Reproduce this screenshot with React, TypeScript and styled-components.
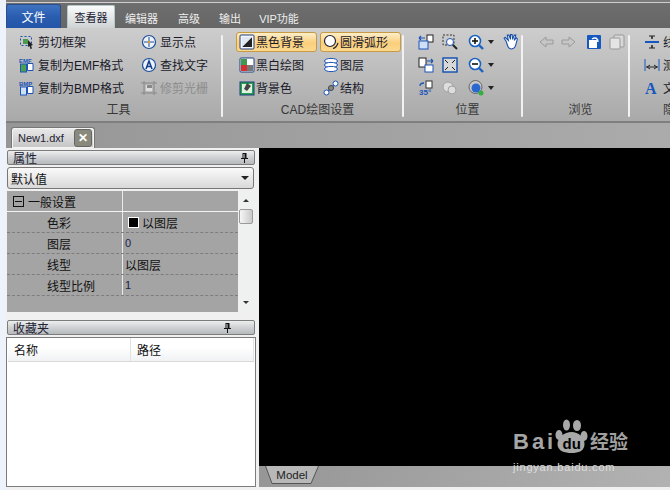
import React from 'react';
import styled, { createGlobalStyle } from 'styled-components';

const Global = createGlobalStyle`
  html, body { margin: 0; padding: 0; background: #f0f1f4; overflow: hidden; }
  * { box-sizing: border-box; }
  #root { width: 670px; height: 490px; }
`;
const FONT = `"Liberation Sans", "Noto Sans CJK SC", sans-serif`;

const Page = styled.div`
  width: 670px; height: 490px; display: flex; flex-direction: column; overflow: hidden;
  padding: 0 0 0 6px; font: 12px ${FONT}; color: #111;
  background: linear-gradient(90deg, #eef3fb 0, #eef3fb 6px, #f0f0f0 6px);
`;
const TabBar = styled.div`
  height: 28px; flex: none; display: flex; align-items: flex-end;
  background: linear-gradient(#7a7a7a 0, #7a7a7a 2px, #cfcfcf 2px, #cfcfcf 3px, #6e6e6e 3px, #666 100%);
`;
const FileTab = styled.div`
  width: 55px; height: 24px; margin-right: 6px; color: #fff; font-size: 12px; display: flex; align-items: center; justify-content: center;
  background: linear-gradient(#3f73c0, #2a5db0 50%, #2456a8); border: 1px solid #2b4f8c; border-bottom: none; border-radius: 3px 3px 0 0;
`;
const Tab = styled.div<{ $active?: boolean; $width: number; $gap?: number }>`
  height: ${p => (p.$active ? 23 : 20)}px; display: flex; align-items: center; font-size: 11px;
  width: ${p => p.$width}px; margin-right: ${p => p.$gap ?? 0}px; justify-content: center; white-space: nowrap;
  color: ${p => (p.$active ? '#223' : '#eee')};
  ${p => p.$active && `background: linear-gradient(#fafbfb, #cfd3d3); border: 1px solid #b5c9c9; border-bottom: none; border-radius: 2px 2px 0 0;`}
`;
const Ribbon = styled.div`
  height: 95px; flex: none; display: flex; overflow: hidden;
  background: linear-gradient(#cdcdcd, #bdbdbd 45%, #a9a9a9);
  border-bottom: 2px solid #7f7f7f;
`;
const Group = styled.div<{ $w: number }>`
  width: ${p => p.$w}px; flex: none; display: flex; flex-direction: column; align-items: center; padding-top: 2px;
  position: relative;
  &::after { content: ''; position: absolute; right: 0; top: 7px; height: 82px; width: 2px; background: #f2f2f2; border-radius: 1px; }
`;
const GroupBody = styled.div<{ $cols: string; $pad?: number }>`
  height: 69px; width: 100%; display: grid; grid-auto-flow: column; grid-template-rows: repeat(3, 23px); align-items: center;
  grid-template-columns: ${p => p.$cols}; padding-left: ${p => p.$pad ?? 0}px;
`;
const GroupLabel = styled.div`
  font-size: 12px; color: #383838; height: 16px; line-height: 16px; text-align: center; margin-top: 3px; width: 100%; padding-left: 8px; white-space: nowrap;
`;
const RibbonBtn = styled.div<{ $on?: boolean; $off?: boolean }>`
  height: 20px; display: flex; align-items: center; gap: 3px; padding-left: 3px; white-space: nowrap; font-size: 12px;
  color: ${p => (p.$off ? '#8d8d8d' : '#1a1a2a')};
  ${p => p.$on && `background: linear-gradient(#fdeec8, #fbcf7c 55%, #fbd98e); border: 1px solid #c79a45; border-radius: 3px; padding-left: 2px;`}
`;
const SettingBtn = styled(RibbonBtn)`
  width: 81px; gap: 1px;
`;
const IconCell = styled.div`
  height: 20px; display: flex; align-items: center; gap: 2px;
`;
const Caret = styled.span`
  width: 0; height: 0; border: 3px solid transparent; border-top: 4px solid #222; border-bottom: none; margin-left: 2px;
`;
const DocTabs = styled.div`
  height: 25px; flex: none; background: linear-gradient(90deg, #969696, #ababab); display: flex; align-items: flex-end; padding-left: 5px;
`;
const DocTab = styled.div`
  width: 84px; height: 21px; background: linear-gradient(#eaeaea, #c4c4c4); border: 1px solid #777; border-bottom: none; border-radius: 3px 3px 0 0;
  display: flex; align-items: center; justify-content: space-between; padding: 0 2px 0 6px; font-size: 11px; color: #223;
  box-shadow: inset 0 0 0 1px #f4f4f4;
`;
const CloseBtn = styled.div`
  width: 18px; height: 18px; background: #8a8a7c; border: 1px solid #666; border-radius: 3px; color: #fff; font-weight: 700; font-size: 12px;
  display: flex; align-items: center; justify-content: center; line-height: 1;
`;
const Main = styled.div`
  flex: 1; display: flex; min-height: 0; background: #f0f0f0;
`;
const Side = styled.div`
  width: 253px; flex: none; display: flex; flex-direction: column; padding-top: 2px;
`;
const PanelTitle = styled.div`
  width: 248px; height: 15px; display: flex; align-items: center; padding: 0 5px; font-size: 12px; color: #223; margin-left: 1px;
  background: linear-gradient(#eceeef, #cfd1d4 50%, #b7babd); border: 1px solid #7c7c7c; border-radius: 2px; position: relative;
  flex: none;
`;
const Pin = styled.span<{ $right: number }>`
  position: absolute; right: ${p => p.$right}px; top: 2px; display: flex;
`;
const Combo = styled.div`
  width: 247px; height: 22px; margin: 2px 0 0 1px; flex: none; border: 1px solid #777; border-radius: 3px; display: flex; align-items: center; justify-content: space-between;
  padding: 0 4px 0 3px; font-size: 12px; background: linear-gradient(#fafafa, #d9d9d9);
`;
const ComboArrow = styled.span`
  width: 0; height: 0; border: 4px solid transparent; border-top: 4px solid #222; border-bottom: none;
`;
const PropWrap = styled.div`
  width: 247px; height: 121px; margin: 2px 0 0 1px; display: flex; flex: none;
  background: #a4a4a4;
`;
const PropGrid = styled.div`
  flex: 1; display: flex; flex-direction: column;
`;
const PropRow = styled.div<{ $head?: boolean }>`
  height: 21px; display: grid; grid-template-columns: 116px 1fr; align-items: center; font-size: 12px; color: #111;
  border-bottom: ${p => (p.$head ? '1px solid #f2f2f2' : '1px dashed #7d7d7d')};
  flex: none;
`;
const PropName = styled.div<{ $head?: boolean }>`
  height: 100%; display: flex; align-items: center; gap: 4px;
  padding-left: ${p => (p.$head ? 6 : 40)}px; border-right: 1px solid #eaeaea;
`;
const PropValue = styled.div`
  display: flex; align-items: center; gap: 3px; padding-left: 2px;
`;
const Num = styled.span`
  font-size: 11px; color: #1c1c50;
`;
const Swatch = styled.span`
  width: 11px; height: 11px; background: #000; border: 1px solid #fff; margin-left: 3px;
`;
const Expander = styled.span`
  width: 11px; height: 11px; border: 1px solid #111; position: relative; display: inline-block;
  &::after { content: ''; position: absolute; left: 1px; right: 1px; top: 4px; height: 1px; background: #111; }
`;
const ScrollBar = styled.div`
  width: 16px; flex: none; background: #eff0f0; display: flex; flex-direction: column; align-items: center; position: relative; padding: 8px 0 8px; justify-content: space-between;
`;
const Thumb = styled.div`
  position: absolute; top: 18px; left: 1px; width: 14px; height: 15px; background: linear-gradient(90deg,#f6f6f6,#c9c9c9); border: 1px solid #9a9a9a; border-radius: 2px;
`;
const Tri = styled.span<{ $up?: boolean }>`
  width: 0; height: 0; border: 3px solid transparent;
  ${p => (p.$up ? 'border-bottom: 3px solid #333; border-top: none;' : 'border-top: 3px solid #333; border-bottom: none;')}
`;
const Gap = styled.div` height: 8px; flex: none; `;
const FavList = styled.div`
  width: 250px; margin: 2px 0 0 0; height: 150px; background: #fff; border: 1px solid #7c7c7c; flex: none; padding: 0 1px;
`;
const FavHead = styled.div`
  height: 24px; display: grid; grid-template-columns: 123px 1fr; align-items: center; font-size: 12px;
  background: linear-gradient(#fff 40%, #f1f2f4); border-bottom: 1px solid #d8d8d8;
`;
const FavCol = styled.div`
  height: 100%; display: flex; align-items: center; padding-left: 6px; border-right: 1px solid #e2e2e2;
`;
const CanvasCol = styled.div`
  flex: 1; display: flex; flex-direction: column; position: relative; margin-bottom: 3px;
`;
const Canvas = styled.div` flex: 1; background: #000; `;
const SheetBar = styled.div`
  height: 21px; background: linear-gradient(90deg, #969696, #b2b2b2); padding-left: 6px; flex: none;
`;
const SheetTab = styled.div`
  width: 54px; height: 18px; color: #222; font-size: 11.5px; display: flex; align-items: center; justify-content: center; position: relative;
  svg { position: absolute; left: 0; top: 0; }
  span { position: relative; }
`;
const Watermark = styled.div`
  position: absolute; right: 37px; bottom: 14px; width: 120px; display: flex; flex-direction: column;
`;
const WmTop = styled.div`
  display: flex; align-items: flex-end; height: 37px; margin-bottom: 7px;
`;
const WmBai = styled.span`
  font: 700 22px ${FONT}; line-height: 22px; letter-spacing: 3px; color: #a6a6a6; margin-bottom: 1px; width: 41px; flex: none;
`;
const WmCn = styled.span`
  font: 700 19px ${FONT}; line-height: 22px; color: #a0a0a0; margin-left: 1px; white-space: nowrap;
`;
const WmUrl = styled.div`
  font: 11px ${FONT}; letter-spacing: .8px; color: #dcdcdc; line-height: 12px; white-space: nowrap;
`;

const S = (p: { children: React.ReactNode; s?: number }) => (
  <svg width={p.s ?? 16} height={p.s ?? 16} viewBox="0 0 16 16" style={{ flex: 'none' }}>{p.children}</svg>
);
const Cut = () => <S><rect x="1.5" y="2.5" width="11" height="9" fill="none" stroke="#1c4fa5" strokeDasharray="2 2" /><rect x="4" y="5" width="5" height="5" fill="#4a9a50" /><path d="M9 6l5 5-2 .5 1 3-1.5.5-1-3-1.5 1z" fill="#222" /></S>;
const Copy = ({ t, c }: { t: string; c: string }) => <S><text x="0" y="5.5" fontSize="6" fontWeight="700" fill="#1c55b8" fontFamily="Liberation Sans">{t}</text><rect x="1.5" y="7" width="6" height="8" fill={c} stroke="#1c55b8" /><path d="M8.5 6.5h5.5v7H8.5z" fill="#fff" stroke="#1c55b8" /></S>;
const Target = () => <S><circle cx="8" cy="8" r="6.5" fill="#eef3fb" stroke="#1d4f98" strokeWidth="1.2" /><path d="M8 3v10M3 8h10" stroke="#1d4f98" /><circle cx="8" cy="8" r="1.2" fill="#e0a020" /></S>;
const FindText = () => <S><circle cx="8" cy="8" r="6.5" fill="#eef3fb" stroke="#1d4f98" strokeWidth="1.2" /><path d="M5 12L8 4l3 8M6 9.5h4" fill="none" stroke="#123f90" strokeWidth="1.6" /></S>;
const Crop = () => <S><path d="M3 1v14M13 1v14M0 3h16M0 13h16" stroke="#888" /><rect x="4" y="4" width="8" height="8" fill="#ddd" stroke="#999" /><rect x="6" y="5" width="5" height="3" fill="#888" /></S>;
const BlackBg = () => <S><rect x="1" y="1" width="14" height="14" rx="1" fill="#f4f6fa" stroke="#1d3f80" /><path d="M13 3v10H3z" fill="#222" /><path d="M3 3h10L3 13z" fill="#dfe6f4" /></S>;
const Mono = () => <S><rect x="1" y="1" width="14" height="14" rx="1" fill="#fff" stroke="#1d3f80" /><rect x="2" y="2" width="6" height="6" fill="#3d9a50" /><rect x="8" y="8" width="6" height="6" fill="#777" /><rect x="2" y="8" width="6" height="6" fill="#d43030" /></S>;
const BgColor = () => <S><rect x="1" y="2" width="14" height="13" fill="#2aa050" stroke="#1d3f80" /><rect x="3" y="4" width="10" height="9" fill="#dff3e0" /><path d="M5 9l3-6 4 3-4 5z" fill="#444" /></S>;
const Arc = () => <S><circle cx="7" cy="7" r="5.5" fill="#fff" stroke="#223" strokeWidth="1.2" /><path d="M15 9c-1 3-3 5-5 5.5" fill="none" stroke="#223" strokeWidth="1.2" /></S>;
const Layers = () => <S><ellipse cx="8" cy="4" rx="6.5" ry="2.6" fill="#fff" stroke="#1c55b8" /><ellipse cx="8" cy="8" rx="6.5" ry="2.6" fill="#fff" stroke="#1c55b8" /><ellipse cx="8" cy="12" rx="6.5" ry="2.6" fill="#fff" stroke="#1c55b8" /></S>;
const Struct = () => <S><path d="M3 13L13 3" stroke="#1c55b8" strokeWidth="1.5" /><circle cx="3.5" cy="12.5" r="2.5" fill="#fff" stroke="#1c55b8" /><circle cx="8" cy="8" r="2.5" fill="#888" stroke="#444" /><circle cx="12.5" cy="3.5" r="2.5" fill="#fff" stroke="#1c55b8" /></S>;
const PagesA = () => <S><rect x="9" y="1" width="6" height="7" fill="#fff" stroke="#222" /><rect x="1" y="7" width="9" height="8" fill="#cfe0f6" stroke="#1c55b8" /><path d="M1 4h6M1 4l2-2M1 4l2 2" fill="none" stroke="#1c55b8" strokeWidth="1.200" /></S>;
const PagesB = () => <S><rect x="1" y="1" width="7" height="9" fill="#fff" stroke="#222" /><rect x="7" y="8" width="8" height="7" fill="#fff" stroke="#1c55b8" /><path d="M9 4h6M15 4l-2-2M15 4l-2 2" fill="none" stroke="#1c55b8" strokeWidth="1.200" /></S>;
const Rot = () => <S><rect x="8" y="1" width="6" height="7" fill="#fff" stroke="#333" /><path d="M2 6c0-2 2-3 4-3" fill="none" stroke="#1c55b8" strokeWidth="1.3" /><text x="1" y="15" fontSize="8" fontWeight="700" fill="#1c55b8" fontFamily="Liberation Sans">35°</text></S>;
const ZoomBox = () => <S><rect x="1" y="1" width="11" height="10" fill="none" stroke="#333" strokeDasharray="2 1.5" /><circle cx="8" cy="8" r="3.5" fill="#fff" stroke="#1c55b8" /><path d="M11 11l4 4" stroke="#222" strokeWidth="2" /></S>;
const Fit = () => <S><rect x="1" y="1" width="14" height="14" fill="#d8d8d8" stroke="#0f4fb0" strokeWidth="1.4" /><path d="M3 3l3 3M13 3l-3 3M3 13l3-3M13 13l-3-3" stroke="#222" /></S>;
const Prev = () => <S><circle cx="6" cy="7" r="5" fill="#ddd" stroke="#a0a0a0" /><circle cx="10" cy="10" r="4" fill="#ddd" stroke="#a0a0a0" /></S>;
const Lens = ({ plus }: { plus?: boolean }) => <S><circle cx="7" cy="7" r="5.5" fill="#fff" stroke="#1c62c0" strokeWidth="1.6" /><path d="M4 7h6" stroke="#111" strokeWidth="1.6" />{plus && <path d="M7 4v6" stroke="#111" strokeWidth="1.6" />}<path d="M11 11l4 4" stroke="#1c62c0" strokeWidth="2.4" /></S>;
const Globe = () => <S><circle cx="7.500" cy="7" r="6.500" fill="#c8c8c8" stroke="#666" /><circle cx="8" cy="8" r="4.500" fill="#2a68d0" /><circle cx="13" cy="13" r="2.500" fill="#33b040" /></S>;
const Hand = () => <S s={17}><path d="M4 8L2 5l1-1 3 3-1-5h1.500l1.500 4V1.500h1.500L10 6l1.500-4H13l-1.500 5 2-2.500 1 1L13 11c-.5 2-1 4-4 4-3 0-3.500-2-5-7z" fill="#fff" stroke="#174fa8" /></S>;
const ArrowIcon = ({ r }: { r?: boolean }) => <S><path d={r ? 'M1 6h7V3l6 5-6 5v-3H1z' : 'M15 6H8V3L2 8l6 5v-3h7z'} fill="#c6c6c6" stroke="#9a9a9a" /></S>;
const Nav = () => <S><rect x="1" y="1" width="14" height="14" fill="#1458c0" rx="1" /><rect x="3" y="6" width="8" height="8" fill="#fff" /><path d="M6 5c3-2 6-1 6 3" fill="none" stroke="#fff" strokeWidth="1.500" /></S>;
const NavOff = () => <S><rect x="5" y="1" width="10" height="12" fill="#d8d8d8" stroke="#999" rx="1" /><rect x="1" y="4" width="10" height="11" fill="#e4e4e4" stroke="#999" rx="1" /></S>;
const Dim = () => <S><path d="M1 8h14" stroke="#1458c0" strokeWidth="2" /><path d="M8 2v3M8 11v3" stroke="#222" strokeWidth="1.5" /><path d="M5 2h6M5 14h6" stroke="#222" /></S>;
const Meas = () => <S><path d="M1 2v12M15 2v12" stroke="#1458c0" /><path d="M2 10h12M3 10l3-2M3 10l3 2M13 10l-3-2M13 10l-3 2" stroke="#222" /></S>;
const TextA = () => <S><text x="1" y="14" fontSize="16" fontWeight="700" fill="#1458c0" fontFamily="Liberation Serif">A</text></S>;
const PinIcon = () => <svg width="7" height="10" viewBox="0 0 7 10"><path d="M1.500 0h4v5h-4zM0 5h7v1H0zM3 6h1v4H3z" fill="#111" /><rect x="2.500" y="1" width="1" height="4" fill="#ddd" /></svg>;

export default function App() {
  return (
    <Page>
      <Global />
      <TabBar>
        <FileTab>文件</FileTab>
        <Tab $active $width={48} $gap={8}>查看器</Tab>
        <Tab $width={37} $gap={15}>编辑器</Tab>
        <Tab $width={28} $gap={13}>高级</Tab>
        <Tab $width={28} $gap={14}>输出</Tab>
        <Tab $width={42}>VIP功能</Tab>
      </TabBar>
      <Ribbon>
        <Group $w={217}>
          <GroupBody $cols="122px 1fr" $pad={10}>
            <RibbonBtn><Cut />剪切框架</RibbonBtn>
            <RibbonBtn><Copy t="EMF" c="#4aa050" />复制为EMF格式</RibbonBtn>
            <RibbonBtn><Copy t="BMP" c="#cfe0f6" />复制为BMP格式</RibbonBtn>
            <RibbonBtn><Target />显示点</RibbonBtn>
            <RibbonBtn><FindText />查找文字</RibbonBtn>
            <RibbonBtn $off><Crop />修剪光栅</RibbonBtn>
          </GroupBody>
          <GroupLabel>工具</GroupLabel>
        </Group>
        <Group $w={181}>
          <GroupBody $cols="84px 84px" $pad={13}>
            <SettingBtn $on><BlackBg />黑色背景</SettingBtn>
            <SettingBtn><Mono />黑白绘图</SettingBtn>
            <SettingBtn><BgColor />背景色</SettingBtn>
            <SettingBtn $on><Arc />圆滑弧形</SettingBtn>
            <SettingBtn><Layers />图层</SettingBtn>
            <SettingBtn><Struct />结构</SettingBtn>
          </GroupBody>
          <GroupLabel>CAD绘图设置</GroupLabel>
        </Group>
        <Group $w={119}>
          <GroupBody $cols="24px 26px 34px 20px" $pad={14}>
            <IconCell><PagesA /></IconCell>
            <IconCell><PagesB /></IconCell>
            <IconCell><Rot /></IconCell>
            <IconCell><ZoomBox /></IconCell>
            <IconCell><Fit /></IconCell>
            <IconCell><Prev /></IconCell>
            <IconCell><Lens plus /><Caret /></IconCell>
            <IconCell><Lens /><Caret /></IconCell>
            <IconCell><Globe /><Caret /></IconCell>
            <IconCell><Hand /></IconCell>
          </GroupBody>
          <GroupLabel>位置</GroupLabel>
        </Group>
        <Group $w={107}>
          <GroupBody $cols="23px 25px 23px 24px" $pad={15}>
            <IconCell><ArrowIcon /></IconCell>
            <IconCell /><IconCell />
            <IconCell><ArrowIcon r /></IconCell>
            <IconCell /><IconCell />
            <IconCell><Nav /></IconCell>
            <IconCell /><IconCell />
            <IconCell><NavOff /></IconCell>
          </GroupBody>
          <GroupLabel>浏览</GroupLabel>
        </Group>
        <Group $w={70}>
          <GroupBody $cols="60px" $pad={11}>
            <RibbonBtn><Dim />线</RibbonBtn>
            <RibbonBtn><Meas />测</RibbonBtn>
            <RibbonBtn><TextA />文</RibbonBtn>
          </GroupBody>
          <GroupLabel>隐</GroupLabel>
        </Group>
      </Ribbon>
      <DocTabs>
        <DocTab>New1.dxf<CloseBtn>✕</CloseBtn></DocTab>
      </DocTabs>
      <Main>
        <Side>
          <PanelTitle>属性<Pin $right={6}><PinIcon /></Pin></PanelTitle>
          <Combo>默认值<ComboArrow /></Combo>
          <PropWrap>
            <PropGrid>
              <PropRow $head><PropName $head><Expander />一般设置</PropName><div /></PropRow>
              <PropRow><PropName>色彩</PropName><PropValue><Swatch />以图层</PropValue></PropRow>
              <PropRow><PropName>图层</PropName><PropValue><Num>0</Num></PropValue></PropRow>
              <PropRow><PropName>线型</PropName><PropValue>以图层</PropValue></PropRow>
              <PropRow><PropName>线型比例</PropName><PropValue><Num>1</Num></PropValue></PropRow>
            </PropGrid>
            <ScrollBar><Tri $up /><Thumb /><Tri /></ScrollBar>
          </PropWrap>
          <Gap />
          <PanelTitle>收藏夹<Pin $right={23}><PinIcon /></Pin></PanelTitle>
          <FavList>
            <FavHead><FavCol>名称</FavCol><FavCol>路径</FavCol></FavHead>
          </FavList>
        </Side>
        <CanvasCol>
          <Canvas />
          <SheetBar>
            <SheetTab>
              <svg width="54" height="18" viewBox="0 0 54 18"><path d="M0.500 0L7 17.500H46L53.500 0" fill="#b8b8b8" stroke="#555" /></svg>
              <span>Model</span>
            </SheetTab>
          </SheetBar>
          <Watermark>
            <WmTop>
              <WmBai>Bai</WmBai>
              <svg width="35" height="35" viewBox="0 0 35 35" style={{ flex: 'none' }}>
                <g fill="#a8a8a8">
                  <ellipse cx="5" cy="16" rx="3.500" ry="5" />
                  <ellipse cx="12.500" cy="6" rx="3.500" ry="5.500" />
                  <ellipse cx="23" cy="6.500" rx="4" ry="5.500" />
                  <ellipse cx="30" cy="17" rx="3.500" ry="5" />
                  <path d="M17.500 13c7 0 13 5 13 12 0 7-6 9-13 9s-14-2-14-9c0-7 7-12 14-12z" />
                </g>
                <text x="8.500" y="30" fontSize="15" fontWeight="700" fill="#000" fontFamily="Liberation Sans">du</text>
              </svg>
              <WmCn>经验</WmCn>
            </WmTop>
            <WmUrl>jingyan.baidu.com</WmUrl>
          </Watermark>
        </CanvasCol>
      </Main>
    </Page>
  );
}
